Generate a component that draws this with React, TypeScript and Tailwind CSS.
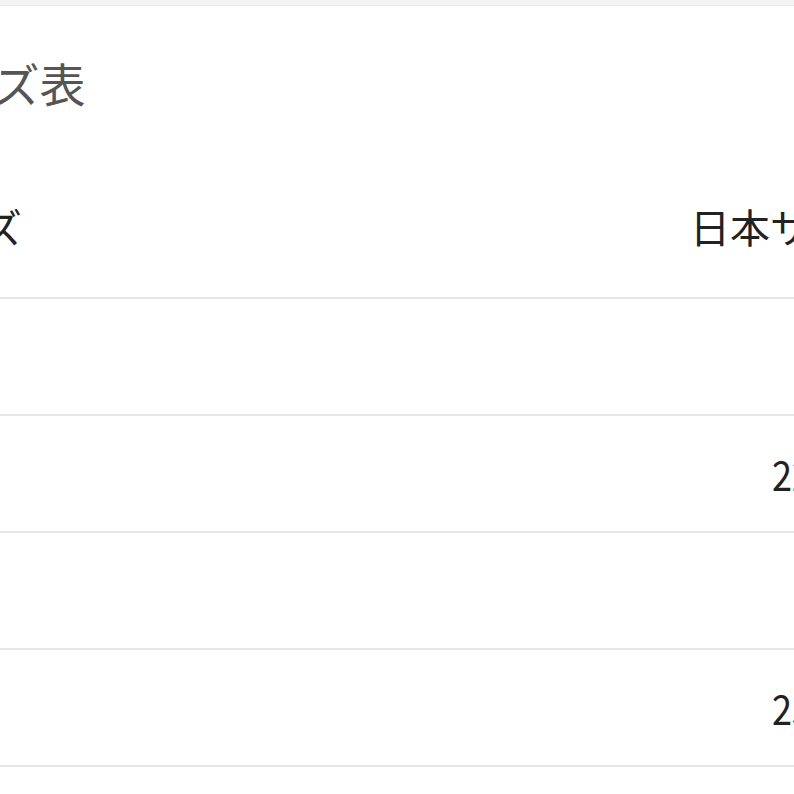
import React from "react";

const rows = [
    { label: "US 5", jp: "", other: "22" },
    { label: "US 5.5", jp: "22.5", other: "" },
    { label: "US 6", jp: "", other: "23" },
    { label: "US 6.5", jp: "23.5", other: "" },
];

function SizeTable() {
    return (
        <div className="w-[1200px] -ml-[100px]">
            {/* Title */}
            <h2 className="pl-[3px] pt-[53px] pb-[49px] text-[46px] leading-none text-[#555] font-normal">
                サイズ表
            </h2>

            {/* Header */}
            <div className="flex items-center h-[145px] border-b-2 border-[#e6e6e6] text-[40px] leading-none text-[#222]">
                <div className="w-[790px] pl-[3px]">サイズ</div>
                <div className="flex-1">日本サイズ</div>
            </div>

            {rows.map((row) => (
                <div
                    key={row.label}
                    className="flex items-center h-[117px] border-b-2 border-[#e6e6e6] text-[41px] leading-none text-[#222]"
                >
                    <div className="w-[790px] pl-[3px] invisible">{row.label}</div>
                    <div className="w-[100px] pl-[82px] whitespace-nowrap">
                        <span className="inline-block origin-left scale-x-[0.88]">{row.jp}</span>
                    </div>
                    <div className="flex-1 pl-[40px]">{row.other}</div>
                </div>
            ))}
        </div>
    );
}

export default function App() {
    return (
        <div
            className="w-[794px] h-[794px] overflow-hidden bg-white"
            style={{ fontFamily: '"Noto Sans CJK JP", "Noto Sans", sans-serif' }}
        >
            <div className="h-[6px] bg-[#f4f4f4] border-b border-[#e8e8e8]" />
            <SizeTable />
        </div>
    );
}
